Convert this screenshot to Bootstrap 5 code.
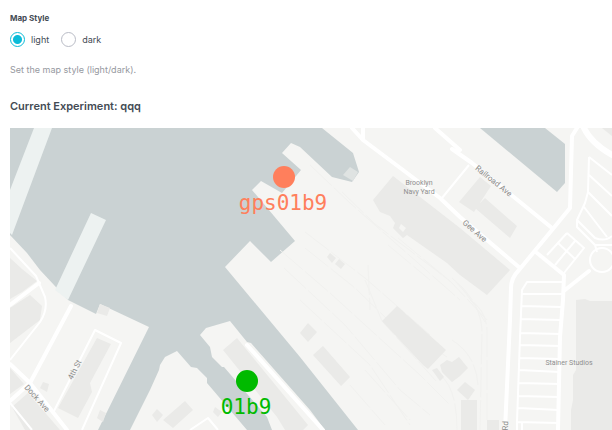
<!DOCTYPE html>
<html lang="en">
<head>
<meta charset="utf-8">
<meta name="viewport" content="width=device-width, initial-scale=1">
<title>Map Style</title>
<link href="https://cdn.jsdelivr.net/npm/bootstrap@5.3.0/dist/css/bootstrap.min.css" rel="stylesheet">
<style>
  body { font-family: Inter, "Open Sans", sans-serif; font-size: 9px; line-height: 12px; color: #434b54; background: #fff; }
  .panel { padding: 12px 0 0 10px; }
  .style-title { font-size: 8px; line-height: 12px; font-weight: 700; }
  .style-options { gap: 12px; padding-top: 8px; }
  .style-choice { gap: 6px; }
  .style-options .form-check-input { width: 15px; height: 15px; border: 1px solid #b9bcc6; box-shadow: none; }
  .style-options .form-check-input:checked { border-color: #0bbbd8; background: radial-gradient(circle, #0bbbd8 0 4px, #fff 5px); }
  .help-line { margin-top: 17px; line-height: 12px; color: #9699a0; }
  .experiment { font-size: 11px; line-height: 16px; font-weight: 600; margin: 22px 0 14px; }
  .map-land { background: #f5f5f3; }
  .water { fill: #cad2d3; }
  .pier { fill: #edf2f1; }
  .building { fill: #eaeae8; }
  .road { fill: none; stroke: #fff; stroke-width: 4; stroke-linejoin: round; stroke-linecap: round; }
  .lane { fill: none; stroke: #fff; stroke-width: 2; stroke-linejoin: round; }
  .rail { fill: none; stroke: #f1f1ef; stroke-width: 1; stroke-dasharray: 30 3; }
  .street { font: 400 8px Roboto, sans-serif; fill: #8c8c8b; stroke: #f7f7f6; stroke-width: 1px; paint-order: stroke; text-anchor: middle; }
  .district { font: 400 7px Roboto, sans-serif; fill: #8f8f8f; text-anchor: middle; }
  .tag { font: 21px "DejaVu Sans Mono", monospace; text-anchor: middle; }
  .gps { fill: #ff7f5c; }
  .tracker { fill: #00ba00; }
</style>
<script src="https://cdn.jsdelivr.net/npm/bootstrap@5.3.0/dist/js/bootstrap.bundle.min.js"></script>
</head>
<body>
<main class="panel">
  <fieldset>
    <legend class="style-title mb-0">Map Style</legend>
    <div class="style-options d-flex align-items-center">
      <div class="style-choice d-flex align-items-center">
        <input class="form-check-input m-0 flex-shrink-0" type="radio" name="mapStyle" id="light" checked>
        <label for="light">light</label>
      </div>
      <div class="style-choice d-flex align-items-center">
        <input class="form-check-input m-0 flex-shrink-0" type="radio" name="mapStyle" id="dark">
        <label for="dark">dark</label>
      </div>
    </div>
  </fieldset>
  <p class="help-line mb-0">Set the map style (light/dark).</p>
  <h2 class="experiment">Current Experiment: qqq</h2>
  <svg class="map-land d-block w-100" viewBox="10 128 602 302" role="img" aria-label="Map of Brooklyn Navy Yard">
    <!-- Water -->
    <path class="water" d="M10 128H322L353 153 359 172 352 182 332 177 300 147 291 143 282 153 301 170 282 193 261 181 252 190 295 241 271 262 250 241 225 267 300 357 358 430H325L310 410 251 343 247 342 230 321 206 328 200 335 210 347 212 357 222 367 224 367 267 417 272 430H247L207 383V378L197 368 191 367 177 351 165 357 160 365 159 370 150 390 130 430H98L149 327 100 304 96 314 68 300 40 270 27 253 10 235Z"/>
    <path class="water" d="M480 128H545L565 144V183L557 192Z"/>
    <path class="pier" d="M34 128H52L12 235 10 233V190Z M91 213L106 220 68 300 55 290Z"/>

    <!-- Faint rail tracks -->
    <g class="rail">
      <path d="M310 165L350 203 460 300M342 192L375 224 450 281 487 320M305 232L365 278 430 335M305 248L355 288 390 322"/>
      <path d="M280 250L330 293 420 375 450 405M284 268L345 325 400 390 430 415M300 300L370 365 410 425M365 280L382 321 436 381M368 265L370 310M387 318L447 357"/>
      <path d="M452 278Q480 300 482 330L480 430M470 300Q486 310 487 330V420M456 282Q470 296 485 322M452 340Q476 355 478 385"/>
      <path d="M440 375Q457 388 457 430M365 370L410 420M350 385L385 425M388 245L430 280M398 238L450 281"/>
    </g>

    <!-- Buildings -->
    <g class="building">
      <path d="M10 258L22 269 37 281 22 292 10 299Z M30 295L42 306 40 320 10 343V308Z M97 338L111 344 90 383 92 392 78 418 58 408Z"/>
      <path d="M28 393L60 430H25L12 407Z M10 368L24 384 10 394Z M43 382L49 384 47 392 40 388Z M100 304L110 308 107 316 97 313Z M100 410L106 413 103 422 97 418Z"/>
      <path d="M237 338L308 425 303 430H285L277 417 223 350Z M185 401L193 410 173 428 163 420Z M157 409L163 415 157 422 152 415Z M215 407L222 412 218 417 213 412Z"/>
      <path d="M393 176L460 228 510 270 487 295 460 275 447 263 407 235 403 238 393 228 395 223 390 216 380 212 373 200Z"/>
      <path d="M480 177L491 186 474 212 459 202Z M485 198L517 226 510 238 475 208Z"/>
      <path d="M330 253L336 258 332 263 327 257Z M339 259L345 264 341 269 335 264Z"/>
      <path d="M397 306L446 350 428 369 423 365 382 321Z M308 323L317 332 308 342 300 333Z M323 346L350 377 341 386 313 355Z"/>
      <path d="M432 370L437 368 444 377 440 381Z M440 365L447 360 452 362 459 357 468 368 460 376 452 382 442 372Z M465 382L475 390 468 400 457 390Z M461 400H477V430H461Z M487 420H499V430H487Z"/>
      <path d="M576 300L585 299 590 301H612V430H571V410L573 400V375L576 370Z M602 128H612V136Z"/>
    </g>
    <path fill="#dfe3e2" d="M350 167L358 172 353 181 343 175Z"/>
    <path fill="#f5f5f3" d="M401 224L406 228 403 232 399 228Z"/>

    <!-- Roads on the west shore and piers -->
    <g class="road">
      <path d="M10 305L39 283M71 306L30 383 10 401M10 364L30 383 67 430M247 345L323 430"/>
    </g>
    <g class="lane">
      <path d="M10 248L36 276 39 283 45 297Q48 310 40 322L10 360M53 413L95 330 121 343 82 430M10 403L32 430M190 430L208 418 218 430"/>
    </g>

    <!-- Roads in the navy yard -->
    <g class="road">
      <path d="M352 128L363 140 403 170 440 198 460 217 520 268M363 128V140M435 128L460 150M452 149L472 163 552 228"/>
      <path d="M577 128L572 136 570 208 552 230 519 270Q511 278 511 288L510 320 505 430"/>
      <path d="M537 253L564 275 563 300 560 337 558 430M565 290L589 271"/>
      <path stroke-width="6" d="M584 128Q591 143 612 155"/>
    </g>
    <g class="lane">
      <circle cx="602" cy="260" r="12"/>
      <path d="M442 198L469 165M589 157L588 192 585 203 577 220V227L595 245 597 252M589 157L612 175M589 175L612 196M588 192L612 216M584 207L607 237M577 220L595 238Q605 242 612 236M595 245H612"/>
      <path d="M567 233L584 248 564 273M567 233L547 255M575 241L555 265M558 243L575 259"/>
      <path d="M562 282H527L522 290 520 337 517 422V430M522 294H562M521 306L562 307M520 319L561 320M520 333L561 334M520 345L561 346M519 358L560 359M519 370L560 372M519 383L560 384M518 396L560 397M518 408L559 410M517 422L559 423M522 423V430"/>
    </g>

    <!-- Map labels -->
    <g class="street">
      <text transform="translate(492 183) rotate(39)">Railroad Ave</text>
      <text transform="translate(473 233) rotate(41)">Gee Ave</text>
      <text transform="translate(77 371) rotate(-63)">4th St</text>
      <text transform="translate(35 400) rotate(48)">Dock Ave</text>
      <text transform="translate(508 426) rotate(-87)">Rd</text>
    </g>
    <g class="district">
      <text x="419" y="185">Brooklyn</text>
      <text x="419" y="194">Navy Yard</text>
      <text x="569" y="365">Stainer Studios</text>
    </g>

    <!-- Device markers -->
    <g class="gps">
      <circle cx="284" cy="177" r="11"/>
      <text class="tag" x="283" y="210">gps01b9</text>
    </g>
    <g class="tracker">
      <circle cx="247" cy="381" r="11"/>
      <text class="tag" x="246" y="414">01b9</text>
    </g>
  </svg>
</main>
</body>
</html>
